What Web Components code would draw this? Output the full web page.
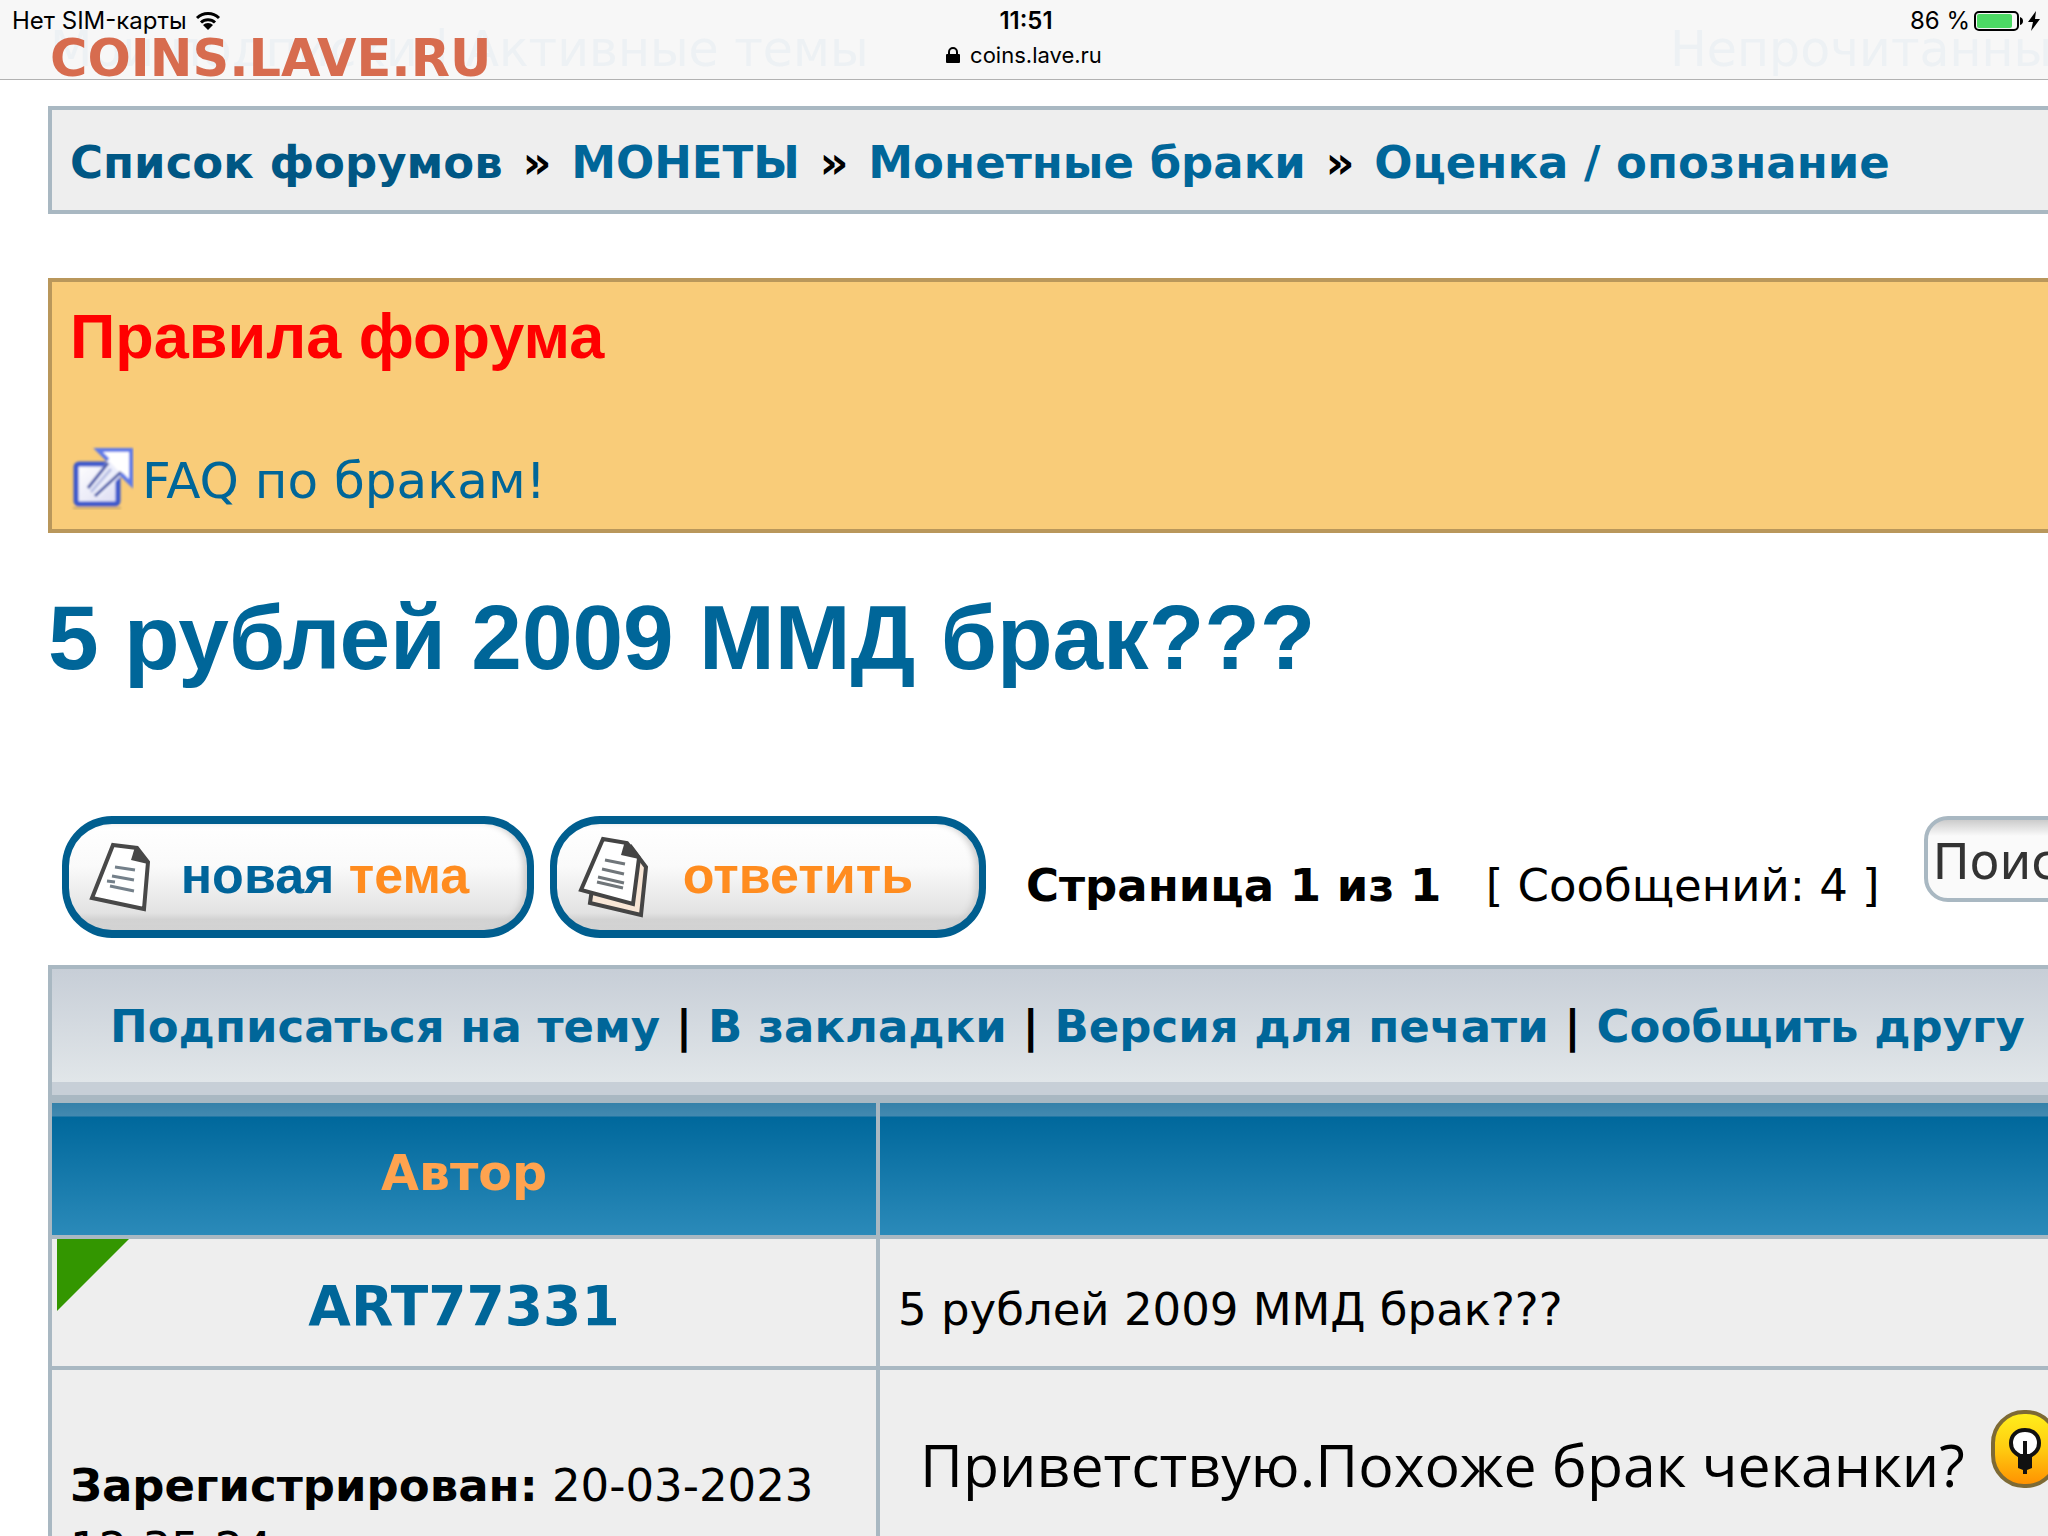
<!DOCTYPE html>
<html lang="ru">
<head>
<meta charset="utf-8">
<title>5 рублей 2009 ММД брак???</title>
<style>
  body {
    margin: 0;
    background: #fff;
    color: #000;
    font-family: Verdana, "DejaVu Sans", sans-serif;
    font-size: 45px;
    line-height: 60px;
    overflow: hidden;
    --link: #069;
    --line: #a9b8c2;
    --cell: #eee;
  }
</style>
</head>
<body>
<forum-page></forum-page>

<script>
const LINK_STYLE = 'a { color: var(--link); text-decoration: none; }';

// define(tag, html): registers an element whose shadow root is a clone of html
function define(tag, html) {
  const template = document.createElement('template');
  template.innerHTML = html;
  customElements.define(tag, class extends HTMLElement {
    constructor() {
      super();
      this.attachShadow({ mode: 'open' });
      this.shadowRoot.appendChild(template.content.cloneNode(true));
    }
  });
}

define('browser-bar', `
  <style>
    :host { display: block; position: relative; height: 79px; background: #f7f7f7; border-bottom: 1px solid #b2b2b2; overflow: hidden; font-family: Inter, Roboto, sans-serif; font-size: 24px; line-height: 32px; }
    .under { position: absolute; left: 50px; right: 0; top: 20px; font-family: Verdana, "DejaVu Sans", sans-serif; font-size: 49px; line-height: 60px; color: #edf1f4; white-space: nowrap; display: flex; }
    .under span:last-child { position: absolute; left: 1620px; }
    .brand { position: absolute; left: 50px; top: 29px; font: bold 51px/60px Verdana, "DejaVu Sans", sans-serif; color: #d76c4f; }
    .status { position: relative; display: grid; grid-template-columns: 1fr auto 1fr; align-items: center; padding: 5px 8px 0 12px; }
    .side { display: flex; align-items: center; gap: 8px; }
    .side:last-child { justify-content: flex-end; gap: 4px; }
    .time { font-weight: 600; }
    .address { position: relative; display: flex; justify-content: center; align-items: center; gap: 10px; padding-top: 2px; font-size: 22px; }
    svg { display: block; }
  </style>
  <div class="under"><span>Мои подписки | Активные темы</span><span>Непрочитанные</span></div>
  <div class="brand">COINS.LAVE.RU</div>
  <div class="status">
    <div class="side"><span>Нет SIM-карты</span>
      <svg width="26" height="20" viewBox="0 0 26 20" fill="none" stroke="#000" stroke-width="3"><path d="M2 7a16 16 0 0 1 22 0M6 11.500a10 10 0 0 1 14 0"/><path d="M13 19l-5-5a7 7 0 0 1 10 0z" fill="#000" stroke="none"/></svg>
    </div>
    <span class="time">11:51</span>
    <div class="side"><span>86 %</span>
      <svg width="50" height="20" viewBox="0 0 50 20"><rect x="1" y="1" width="43" height="18" rx="4" fill="none" stroke="#000" stroke-width="2"/><rect x="3" y="3" width="35" height="14" rx="2" fill="#4cd964"/><path d="M46 6q3 1 3 4t-3 4z"/></svg>
      <svg width="12" height="20" viewBox="0 0 12 20"><path d="M8 0L0 11h5L3 20l9-12H7z"/></svg>
    </div>
  </div>
  <div class="address">
    <svg width="14" height="16" viewBox="0 0 14 16"><rect y="7" width="14" height="9" rx="1"/><path d="M3 8V5a4 4 0 0 1 8 0v3" fill="none" stroke="#000" stroke-width="2"/></svg>
    <span>coins.lave.ru</span>
  </div>
`);

define('bread-crumbs', `
  <style>
    :host { display: block; border: 4px solid var(--line); background: var(--cell); padding: 23px 18px 17px; font-weight: bold; white-space: nowrap; }
    ${LINK_STYLE}
    a:first-child { color: #005784; }
    span { margin: 0 4px; }
  </style>
  <nav><a href="#">Список форумов</a> <span>»</span> <a href="#">МОНЕТЫ</a> <span>»</span> <a href="#">Монетные браки</a> <span>»</span> <a href="#">Оценка / опознание</a></nav>
`);

define('forum-rules', `
  <style>
    :host { display: block; border: 4px solid #b9975b; background: #f9cc79; padding: 14px 18px 17px; }
    h3 { margin: 0 0 70px; font: bold 63px/80px Arial, "Liberation Sans", sans-serif; color: #f00; }
    ${LINK_STYLE}
    a { display: flex; align-items: center; gap: 8px; font-size: 50px; line-height: 60px; }
    a span { padding-top: 4px; }
    svg { margin-bottom: 2px; }
  </style>
  <h3>Правила форума</h3>
  <a href="#">
    <svg width="64" height="64" viewBox="0 0 64 64">
      <defs>
        <linearGradient id="g" x2="1" y2="1"><stop stop-color="#fff"/><stop offset="1" stop-color="#dcdcf2"/></linearGradient>
        <filter id="soft"><feGaussianBlur stdDeviation="1"/></filter>
      </defs>
      <g filter="url(#soft)">
        <path d="M3 62h48" stroke="#d8b46e" stroke-width="3"/>
        <rect x="6" y="18" width="42" height="40" rx="3" fill="url(#g)" stroke="#3c58cc" stroke-width="5"/>
        <path d="M38 14L28 4h33v34l-9-9-22 22-14-8z" fill="#eceefb"/>
        <path d="M38 14L28 4h33v34l-10-10" fill="#fff" stroke="#5f7ae8" stroke-width="4"/>
        <path d="M18 42l20-25M25 50l26-24" stroke="#4b5aa8" stroke-width="3"/>
        <path d="M21 46l20-23" stroke="#b9c0e4" stroke-width="3"/>
      </g>
    </svg>
    <span>FAQ по бракам!</span>
  </a>
`);

define('pill-button', `
  <style>
    :host { display: block; }
    button {
      display: flex; align-items: center; box-sizing: border-box; width: 100%; height: 122px; padding: 0 20px;
      border: 7px solid #005e8f; border-width: 8px 7px; border-radius: 50px;
      background: linear-gradient(#fff, #fafafa 40%, #e2e2e2 84%, #d2d2d2 90%, #d4d4d4);
      box-shadow: inset -6px 0 6px -2px #ccc;
      font: bold 52px/60px Arial, "Liberation Sans", sans-serif; color: #ff8c1f; white-space: nowrap;
    }
    .label { flex: 1; padding: 0 12px 4px 0; text-align: center; }
    ::slotted(b) { color: #00649a; }
  </style>
  <button type="button"><slot name="icon"></slot><span class="label"><slot></slot></span></button>
`);

define('topic-actions', `
  <style>
    :host { display: flex; align-items: flex-start; gap: 16px; padding-left: 14px; white-space: nowrap; overflow: hidden; }
    .new { flex: none; width: 472px; }
    .reply { flex: none; width: 436px; }
    .pages { flex: none; margin: 40px 0 0 24px; }
    .pages b { margin-right: 30px; }
    label { flex: none; margin-left: 28px; }
    input { box-sizing: border-box; width: 420px; height: 86px; padding: 6px 5px 0; border: 4px solid var(--line); border-radius: 24px; background: linear-gradient(#ccc, #fafafa 16px); font: 49px/60px Verdana, "DejaVu Sans", sans-serif; color: #333; display: block; }
    svg { display: block; flex: none; }
  </style>
  <pill-button class="new">
    <svg slot="icon" width="66" height="72" viewBox="0 0 66 72"><path d="M24 4l24 3 11 14-4 47L3 57z" fill="#fff" stroke="#484848" stroke-width="4"/><path d="M46 6l-4 13 17 4z" fill="#484848"/><path d="M26 26l20 3M23 35l22 4M21 45l24 5M18 40l8 1" stroke="#74808a" stroke-width="3"/></svg>
    <b>новая</b> тема
  </pill-button>
  <pill-button class="reply">
    <svg slot="icon" width="72" height="84" viewBox="0 0 72 84"><path d="M54 12l15 20-5 48-51-12 2-14z" fill="#f8e6d6" stroke="#444" stroke-width="4"/><path d="M26 4l24 4 12 15-6 46L4 55z" fill="#fff" stroke="#444" stroke-width="4"/><path d="M48 6l-4 14 18 4z" fill="#444"/><path d="M28 25l20 4M25 34l22 5M21 42l26 6M20 47l26 6" stroke="#70767a" stroke-width="3"/></svg>
    ответить
  </pill-button>
  <div class="pages"><b>Страница 1 из 1</b> [ Сообщений: 4 ]</div>
  <label><input type="text" value="Поиск" aria-label="Поиск в теме"></label>
`);

define('topic-tools', `
  <style>
    :host { display: block; border: 4px solid var(--line); padding: 28px 58px 38px; background: linear-gradient(#c7ced7, #e1e6e9 113px, #c7cfd7 113px); font-weight: bold; white-space: nowrap; }
    ${LINK_STYLE}
  </style>
  <a href="#">Подписаться на тему</a> | <a href="#">В закладки</a> | <a href="#">Версия для печати</a> | <a href="#">Сообщить другу</a>
`);

define('post-table', `
  <style>
    :host { display: block; }
    ${LINK_STYLE}
    table { width: 100%; border-collapse: collapse; table-layout: fixed; }
    th, td { box-sizing: border-box; border: 4px solid var(--line); padding: 0 18px; background: var(--cell); }
    th { height: 136px; padding: 10px 0 0; font-size: 49px; color: #ffa34f; background: linear-gradient(#3581a9, #4389b0 13px, #00689c 14px, #2b8ab9); }
    .author { width: 828px; }
    .name, .title { height: 131px; padding-top: 37px; vertical-align: baseline; }
    .name { position: relative; text-align: center; font-size: 55px; font-weight: bold; }
    .name svg { position: absolute; left: 5px; top: 0; }
    .info, .body { height: 320px; padding-top: 84px; vertical-align: top; }
    .info { line-height: 63px; }
    .body { padding: 40px 18px 0 40px; font-family: "Lucida Grande", "Open Sans", sans-serif; font-size: 59px; white-space: nowrap; }
    .message { display: flex; align-items: flex-start; gap: 26px; line-height: 80px; }
    .message span { padding-top: 14px; }
    .message svg { flex: none; }
  </style>
  <table>
    <thead><tr><th class="author">Автор</th><th></th></tr></thead>
    <tbody>
      <tr>
        <td class="name"><svg width="72" height="72"><path d="M0 0h72L0 72z" fill="#339600"/></svg><a href="#">ART77331</a></td>
        <td class="title">5 рублей 2009 ММД брак???</td>
      </tr>
      <tr>
        <td class="info"><b>Зарегистрирован:</b> 20-03-2023 12:35:24</td>
        <td class="body"><div class="message"><span>Приветствую.Похоже брак чеканки?</span>
          <svg width="68" height="78" viewBox="0 0 68 78">
            <defs><linearGradient id="y" x2="0" y2="1"><stop stop-color="#fff01c"/><stop offset="0.500" stop-color="#ffcb10"/><stop offset="1" stop-color="#ff8f00"/></linearGradient></defs>
            <rect x="2" y="2" width="64" height="74" rx="31" fill="url(#y)" stroke="#7d6a35" stroke-width="4"/>
            <path d="M34 20c-9 0-14 6-14 13 0 7 4 10 9 13h10c5-3 9-6 9-13 0-7-5-13-14-13z" fill="#fff" stroke="#111" stroke-width="4"/>
            <path d="M32 31h4v14h5v13l-5 2v4h-4v-4l-5-2V45h5z" fill="#111"/>
          </svg></div></td>
      </tr>
    </tbody>
  </table>
`);

define('forum-page', `
  <style>
    :host { display: block; height: 100vh; overflow: hidden; }
    main { display: flex; flex-direction: column; padding: 26px 0 0 48px; }
    /* the boxes run on past the right edge of the window */
    bread-crumbs, forum-rules, topic-tools, post-table { margin-right: -20px; }
    forum-rules { margin-top: 64px; }
    h2 { margin: 50px 0 123px; font: bold 91px/110px Helvetica, Arial, "Liberation Sans", sans-serif; }
    topic-tools { margin-top: 27px; }
    ${LINK_STYLE}
  </style>
  <browser-bar></browser-bar>
  <main>
    <bread-crumbs></bread-crumbs>
    <forum-rules></forum-rules>
    <h2><a href="#">5 рублей 2009 ММД брак???</a></h2>
    <topic-actions></topic-actions>
    <topic-tools></topic-tools>
    <post-table></post-table>
  </main>
`);
</script>
</body>
</html>
